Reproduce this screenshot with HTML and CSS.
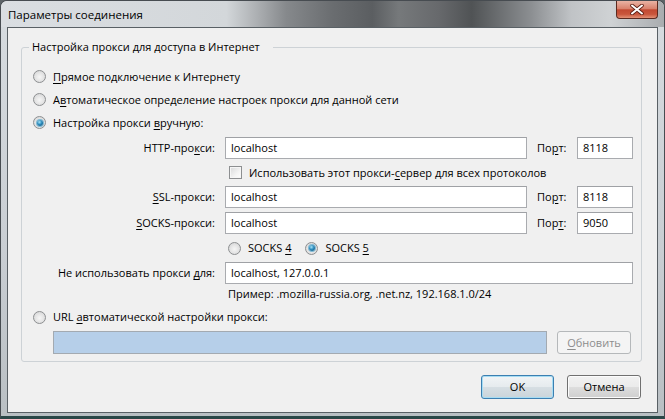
FILE: index.html
```html
<!DOCTYPE html>
<html lang="ru">
<head>
<meta charset="utf-8">
<title>Параметры соединения</title>
<link rel="stylesheet" href="styles.css">
</head>
<body>
<div class="window">
  <div class="titlebar">
    <span class="title">Параметры соединения</span>
    <span class="close" aria-label="Закрыть">
      <svg width="14" height="11" viewBox="0 0 14 11"><path d="M2 1.5 L12 9.5 M12 1.5 L2 9.5" stroke="#5a1d12" stroke-width="3.6" stroke-linecap="round"/><path d="M2 1.5 L12 9.5 M12 1.5 L2 9.5" stroke="#fff" stroke-width="2" stroke-linecap="round"/></svg>
    </span>
  </div>
  <div class="client">
    <fieldset class="group">
      <legend>Настройка прокси для доступа в Интернет</legend>
      <div class="radio-row"><span class="radio"></span><span><u>П</u>рямое подключение к Интернету</span></div>
      <div class="radio-row"><span class="radio"></span><span>А<u>в</u>томатическое определение настроек прокси для данной сети</span></div>
      <div class="radio-row"><span class="radio checked"></span><span>Настройка прокси <u>в</u>ручную:</span></div>

      <div class="manual">
        <span class="lbl"><span>HTTP-про<u>к</u>си:</span></span>
        <span class="field">localhost</span>
        <span class="lbl port"><span>По<u>р</u>т:</span></span>
        <span class="field">8118</span>

        <div class="span3 check-row"><span class="checkbox"></span><span>Использовать этот прокси-<u>с</u>ервер для всех протоколов</span></div>

        <span class="lbl"><span><u>S</u>SL-прокси:</span></span>
        <span class="field">localhost</span>
        <span class="lbl port"><span>По<u>р</u>т:</span></span>
        <span class="field">8118</span>

        <span class="lbl low"><span><u>S</u>OCKS-прокси:</span></span>
        <span class="field low">localhost</span>
        <span class="lbl port low"><span>Пор<u>т</u>:</span></span>
        <span class="field low">9050</span>

        <div class="span3 socks-row">
          <span class="opt first"><span class="radio"></span><span>SOCKS <u>4</u></span></span>
          <span class="opt"><span class="radio checked"></span><span>SOCKS <u>5</u></span></span>
        </div>

        <span class="lbl"><span>Не использовать прокси <u>д</u>ля:</span></span>
        <span class="field span3">localhost, 127.0.0.1</span>

        <div class="span3 example">Пример: .mozilla-russia.org, .net.nz, 192.168.1.0/24</div>
      </div>

      <div class="radio-row url"><span class="radio"></span><span>URL <u>а</u>втоматической настройки прокси:</span></div>
      <div class="url-row">
        <span class="field url-field"></span>
        <span class="btn disabled"><span><u>О</u>бновить</span></span>
      </div>
    </fieldset>

    <div class="buttons">
      <span class="btn default">OK</span>
      <span class="btn">Отмена</span>
    </div>
  </div>
</div>
</body>
</html>
```

FILE: styles.css
```css
* { box-sizing: border-box; }
html, body { margin: 0; padding: 0; }
body {
  width: 665px;
  height: 419px;
  overflow: hidden;
  font-family: "Open Sans", "Noto Sans", sans-serif;
  font-size: 11px;
  line-height: 16px;
  color: #000;
  background: #5d6468;
  white-space: nowrap;
}
u { text-decoration: underline; text-underline-offset: 2px; }

.window {
  width: 665px;
  height: 419px;
  display: flex;
  flex-direction: column;
  border: 1px solid #474c51;
  border-bottom: 3px solid #2a4747;
  border-radius: 7px 7px 0 0;
  background: linear-gradient(180deg, #d7dce0 0%, #c9ced3 60%, #b9bfc3 100%);
}
.titlebar {
  height: 26px;
  display: flex;
  align-items: flex-start;
  justify-content: space-between;
  padding-left: 7px;
  border-radius: 6px 6px 0 0;
  background: linear-gradient(90deg, #dadee2 0%, #d3d7da 34%, #a9acaf 39%, #86898c 43%, #6a6d70 50%, #5b5e61 56%, #76797b 60%, #67696c 66%, #505355 71%, #8c8f92 80%, #c0c3c6 86%, #cfd2d4 92%, #a9acaf 100%);
}
.title { margin-top: 6px; font-size: 11.5px; }
.close {
  width: 42px;
  height: 18px;
  margin-right: 6px;
  display: flex;
  align-items: center;
  justify-content: center;
  border: 1px solid #5b2a20;
  border-top: none;
  border-radius: 0 0 4px 4px;
  background: linear-gradient(180deg, #eab3a4 0%, #d9826d 45%, #c24a32 52%, #c9563c 78%, #e39176 100%);
}

.client {
  flex: 1;
  margin: 0 6px 3px 6px;
  border: 1px solid #596065;
  background: #f0f0f0;
  display: flex;
  flex-direction: column;
}

.group {
  margin: 11px 15px 0 13px;
  padding: 10px 7px 7px 11px;
  border: 1px solid #cdd2d6;
  border-radius: 3px;
  min-width: 0;
}
.group legend {
  padding: 0 13px 0 3px;
  margin-left: -4px;
  line-height: 16px;
}

.radio-row {
  height: 23px;
  display: flex;
  align-items: center;
  gap: 7px;
}
.radio {
  width: 13px;
  height: 13px;
  flex: none;
  border-radius: 50%;
  border: 1px solid #8d8f91;
  background: radial-gradient(circle at 50% 55%, #f6f6f6 0%, #e6e6e6 45%, #cfd0d1 100%);
  display: flex;
  align-items: center;
  justify-content: center;
}
.radio.checked::after {
  content: "";
  width: 6px;
  height: 6px;
  border-radius: 50%;
  background: radial-gradient(circle at 40% 35%, #a6e3f6 0%, #2b8bbd 45%, #0e4e73 100%);
  box-shadow: 0 0 0 1px #7fb8d3;
}
.checkbox {
  width: 13px;
  height: 13px;
  flex: none;
  border: 1px solid #8d8f91;
  background: linear-gradient(135deg, #d8d9da 0%, #f3f3f3 60%, #ffffff 100%);
  box-shadow: inset 0 0 0 1px #f6f6f6;
}

.manual {
  margin: 3px 0 0 20px;
  display: grid;
  grid-template-columns: 172px 302px 50px 56px;
  grid-template-rows: 22px 27px 22px 26px 28px 22px 20px;
}
.lbl {
  display: flex;
  align-items: center;
  justify-content: flex-end;
  padding-right: 10px;
}
.lbl.port { justify-content: flex-start; padding-left: 10px; padding-right: 0; }
.lbl.low { align-items: flex-end; padding-bottom: 3px; }
.field {
  height: 22px;
  display: flex;
  align-items: center;
  padding-left: 5px;
  background: #fff;
  border: 1px solid #a9abaf;
  border-top-color: #9fa1a5;
}
.field.low { align-self: end; }
.span3 { grid-column: 2 / 5; }
.check-row {
  display: flex;
  align-items: center;
  gap: 7px;
  padding-left: 4px;
}
.socks-row {
  display: flex;
  align-items: center;
  padding-left: 3px;
}
.opt { display: flex; align-items: center; gap: 7px; }
.opt.first { margin-right: 14px; }
.example {
  display: flex;
  align-items: center;
  padding-left: 3px;
}

.radio-row.url { height: 26px; }
.url-row {
  margin: 1px 0 0 20px;
  display: flex;
  align-items: center;
  gap: 10px;
}
.url-field {
  width: 494px;
  height: 23px;
  background: #b6cfe9;
  border-color: #a3aab1;
}

.btn {
  width: 73px;
  height: 24px;
  display: flex;
  align-items: center;
  justify-content: center;
  border: 1px solid #707070;
  border-radius: 3px;
  background: linear-gradient(180deg, #f2f2f2 0%, #ebebeb 48%, #dddddd 52%, #cfcfcf 100%);
  box-shadow: inset 0 0 0 1px #fcfcfc;
}
.btn.disabled {
  width: 74px;
  height: 23px;
  color: #8d8d8d;
  border-color: #b5b8ba;
  background: #f4f4f4;
  box-shadow: none;
}
.btn.default {
  border-color: #3c7fb1;
  background: linear-gradient(180deg, #f1f4f6 0%, #e6ebee 48%, #d6dee3 52%, #cad4da 100%);
  box-shadow: inset 0 0 0 1px #a6dcf3;
}
.buttons {
  margin: 13px 16px 0 0;
  display: flex;
  justify-content: flex-end;
  gap: 13px;
}
.buttons .btn:last-child { width: 74px; }
```
